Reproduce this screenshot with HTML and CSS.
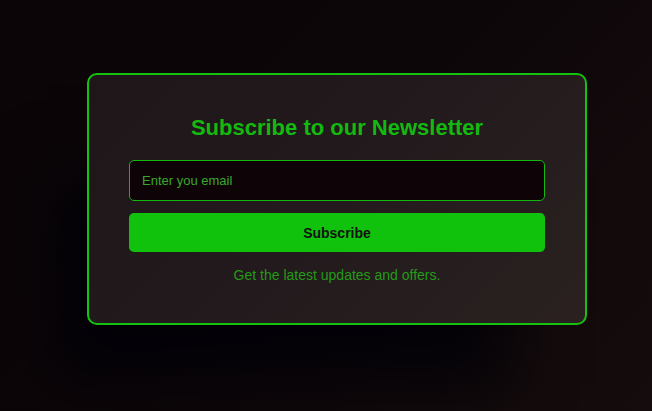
FILE: index.html
```html
<!DOCTYPE html>
<html lang="en">
<head>
<meta charset="utf-8">
<title>Newsletter</title>
<link rel="stylesheet" href="styles.css">
</head>
<body>
<main class="page">
  <section class="card">
    <h2 class="title">Subscribe to our Newsletter</h2>
    <form class="form">
      <input class="email" type="email" placeholder="Enter you email">
      <button class="btn" type="button">Subscribe</button>
    </form>
    <p class="note">Get the latest updates and offers.</p>
  </section>
</main>
</body>
</html>
```
FILE: styles.css
```css
* { box-sizing: border-box; }
html, body { height: 100%; }
body {
  margin: 0;
  font-family: "Liberation Sans", Arial, sans-serif;
  background: linear-gradient(135deg, #0b0507 0%, #0d0608 45%, #150c0d 100%);
  overflow: hidden;
}
.page {
  height: 100%;
  display: flex;
  justify-content: center;
  padding-top: 73px;
  padding-left: 22px;
}
.card {
  width: 500px;
  height: 252px;
  border: 2px solid #14c20f;
  border-radius: 10px;
  background: linear-gradient(135deg, #1e1619 0%, #221a1c 50%, #2a2120 100%);
  padding: 39px 40px 40px;
  text-align: center;
  box-shadow: -60px 80px 60px -20px rgba(0, 0, 8, 0.8);
}
.title {
  margin: 0 0 18px;
  font-size: 22px;
  line-height: 28px;
  font-weight: 700;
  color: #13b90f;
}
.form {
  display: flex;
  flex-direction: column;
  gap: 12px;
}
.email {
  height: 41px;
  border: 1px solid #12b80d;
  border-radius: 5px;
  background: #0e0407;
  padding: 0 12px;
  font-family: "Liberation Sans", Arial, sans-serif;
  font-size: 13px;
  color: #3daa2c;
  outline: none;
}
.email::placeholder { color: #3aa82b; opacity: 1; }
.btn {
  height: 39px;
  border: 0;
  border-radius: 5px;
  background: #10c20b;
  color: #121212;
  font-family: "Liberation Sans", Arial, sans-serif;
  font-size: 14px;
  font-weight: 700;
}
.note {
  margin: 15px 0 0;
  font-size: 14px;
  color: #249a18;
}
```
